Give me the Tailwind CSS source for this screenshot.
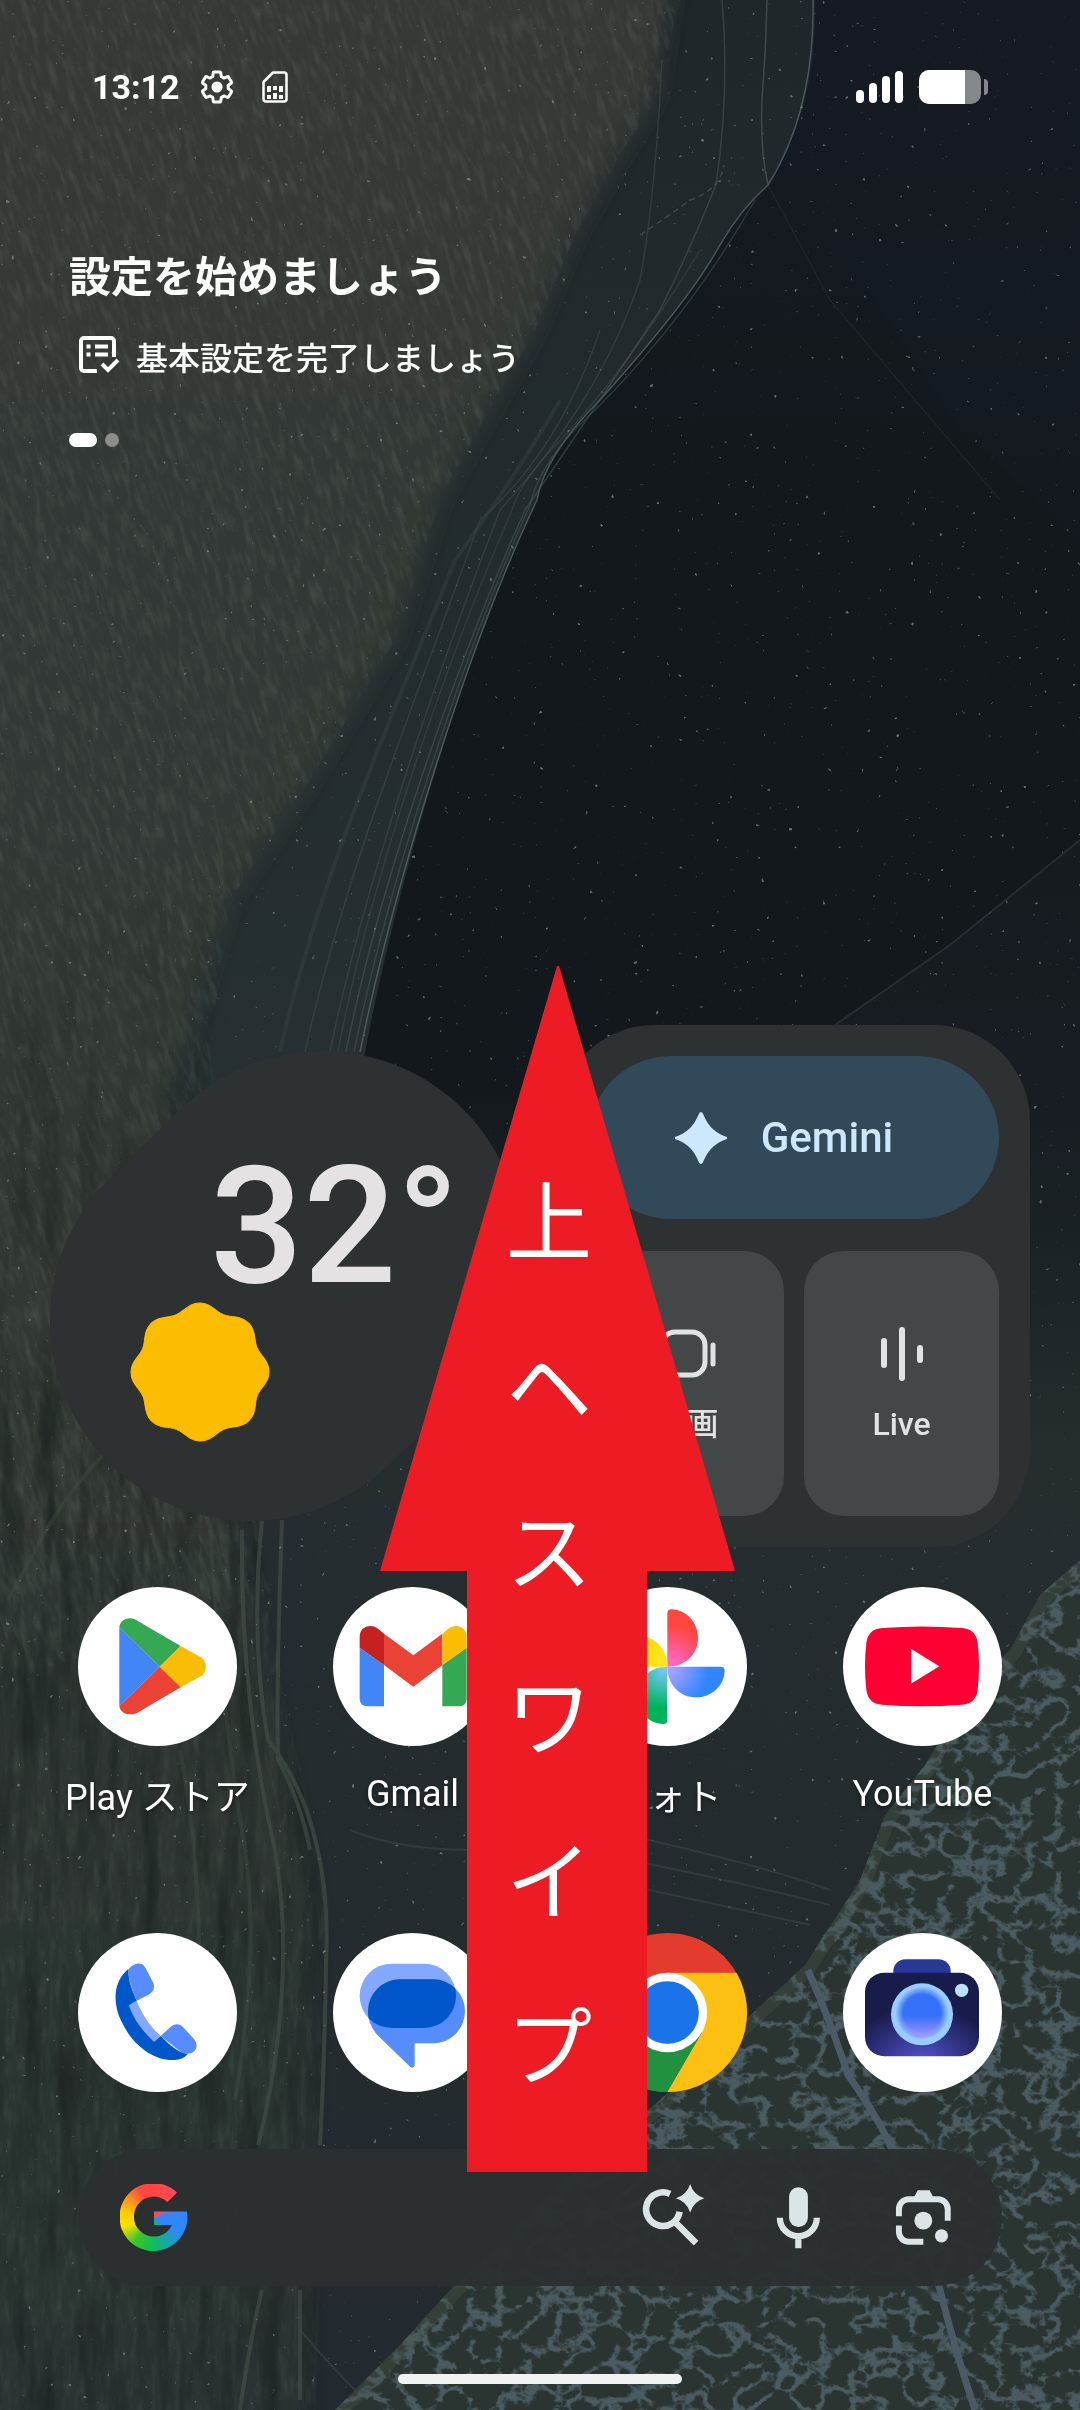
<!DOCTYPE html>
<html lang="ja">
<head>
    <meta charset="UTF-8">
    <meta name="viewport" content="width=device-width, initial-scale=1.0">
    <title>ホーム画面</title>
    <script src="https://cdn.jsdelivr.net/npm/@tailwindcss/browser@4"></script>
</head>
<body class="bg-[#12181c] text-white font-[Roboto,'Noto_Sans_CJK_JP',sans-serif]">
<div class="relative isolate flex min-h-screen flex-col overflow-hidden">

    <!-- Wallpaper -->
    <svg class="absolute inset-0 -z-10 h-full w-full" viewBox="0 0 1080 2410" preserveAspectRatio="xMidYMid slice" aria-hidden="true">
        <defs>
            <linearGradient id="sea" x1="0" y1="0" x2="0" y2="1">
                <stop offset="0" stop-color="#161b22"/>
                <stop offset=".2" stop-color="#12181c"/>
                <stop offset=".45" stop-color="#12181c"/>
                <stop offset=".6" stop-color="#252d2f"/>
                <stop offset="1" stop-color="#232a2f"/>
            </linearGradient>
            <linearGradient id="hill" x1="0" y1="0" x2="0" y2="1">
                <stop offset="0" stop-color="#151b1f"/>
                <stop offset=".4" stop-color="#171d22"/>
                <stop offset="1" stop-color="#252d2f" stop-opacity="0"/>
            </linearGradient>
            <linearGradient id="sand" x1="0" y1="0" x2="0" y2="1">
                <stop offset="0" stop-color="#343934"/>
                <stop offset=".5" stop-color="#323833"/>
                <stop offset=".8" stop-color="#2c3430"/>
                <stop offset="1" stop-color="#2b3330"/>
            </linearGradient>
            <linearGradient id="shelf" x1="0" y1="0" x2="0" y2="1">
                <stop offset="0" stop-color="#1f272b"/>
                <stop offset="1" stop-color="#293235"/>
            </linearGradient>
            <filter id="soft" x="-20%" y="-20%" width="140%" height="140%"><feGaussianBlur stdDeviation="10"/></filter>
            <filter id="ripple" x="0" y="0" width="100%" height="100%" color-interpolation-filters="sRGB">
                <feTurbulence type="fractalNoise" baseFrequency=".16 .04" numOctaves="4" seed="4"/>
                <feColorMatrix values="0 0 0 0 .42  0 0 0 0 .47  0 0 0 0 .44  2 0 0 0 -.85"/>
            </filter>
            <filter id="streak" x="0" y="0" width="100%" height="100%" color-interpolation-filters="sRGB">
                <feTurbulence type="fractalNoise" baseFrequency=".05 .008" numOctaves="3" seed="9"/>
                <feColorMatrix values="0 0 0 0 .11  0 0 0 0 .14  0 0 0 0 .13  2 0 0 0 -.85"/>
            </filter>
            <filter id="specks" x="0" y="0" width="100%" height="100%" color-interpolation-filters="sRGB">
                <feTurbulence type="fractalNoise" baseFrequency=".18" numOctaves="2" seed="21"/>
                <feColorMatrix values="0 0 0 0 .5  0 0 0 0 .56  0 0 0 0 .58  12 0 0 0 -9.200"/>
            </filter>
            <filter id="foam" x="0" y="0" width="100%" height="100%" color-interpolation-filters="sRGB">
                <feTurbulence type="turbulence" baseFrequency=".034 .04" numOctaves="4" seed="7"/>
                <feColorMatrix values="0 0 0 0 .29  0 0 0 0 .36  0 0 0 0 .38  -7 0 0 0 2"/>
            </filter>
            <linearGradient id="fadeDown" x1="0" y1="0" x2="0" y2="1">
                <stop offset="0" stop-color="#000"/>
                <stop offset=".3" stop-color="#fff"/>
            </linearGradient>
            <mask id="streakMask"><rect y="900" width="360" height="1510" fill="url(#fadeDown)"/></mask>
            <clipPath id="sandClip"><path d="M0 0H680L655 100 620 155 575 235 535 330 475 435 440 500 395 640 310 780 230 900 210 1050 250 1450 285 1700 325 1900 315 2410H0Z"/></clipPath>
            <clipPath id="coastClip"><path d="M1080 1560L1040 1595 1010 1650 970 1690 925 1765 885 1815 860 1880 805 1965 740 2025 660 2100 570 2175 450 2290 400 2345 335 2410H1080Z"/></clipPath>
        </defs>

        <rect width="1080" height="2410" fill="url(#sea)"/>
        <path d="M768 185L860 280 960 430 1080 540V0H815Z" fill="#171c25" opacity=".4"/>
        <path d="M1080 840L950 945 835 1025 700 1500H1080Z" fill="url(#hill)"/>
        <path d="M1080 840L950 945 835 1025" fill="none" stroke="#262e32" stroke-width="2"/>

        <!-- Shelf between the sand and the deep water -->
        <path d="M600 0H815Q817 110 768 185 740 210 720 245 690 300 600 400 545 455 537 500C470 640 395 880 360 1080L330 1400 0 1450V0Z" fill="url(#shelf)"/>
        <path d="M-60 -60H680L655 100 620 155 575 235 535 330 475 435 440 500 395 640 310 780 230 900 170 1100 230 1500 270 1700 315 1900 300 2470H-60Z" fill="url(#sand)" filter="url(#soft)"/>
        <g clip-path="url(#sandClip)">
            <g transform="rotate(-18)"><rect x="-500" y="-100" width="1500" height="1700" filter="url(#ripple)" opacity=".3"/></g>
            <rect y="1400" width="360" height="1010" filter="url(#ripple)" opacity=".2"/>
            <g mask="url(#streakMask)"><rect y="900" width="360" height="1510" filter="url(#streak)"/></g>
        </g>

        <!-- Ridge lines -->
        <g fill="none" stroke="#5b676a" stroke-width="1.5" opacity=".75">
            <path d="M813 0Q815 110 768 185 740 210 720 245 690 300 600 400 545 455 537 500C470 640 395 880 360 1052"/>
            <path d="M767 0Q766 50 762 100 760 150 768 185" opacity=".7"/>
            <path d="M722 0Q730 90 716 185 690 250 660 310 580 430 525 510C458 660 380 880 346 1052" opacity=".55"/>
            <path d="M662 60Q655 200 640 280 600 400 500 510C435 680 365 880 330 1052" opacity=".4"/>
            <path d="M755 200Q690 315 595 410 540 460 530 505C464 652 389 880 354 1052" opacity=".5"/>
            <path d="M700 250Q640 350 570 430 520 480 512 510C446 662 370 880 338 1052" opacity=".35"/>
            <path d="M600 330Q560 450 480 520C420 690 345 870 305 1052" stroke="#455550" opacity=".6"/>
            <path d="M560 400Q520 470 455 560C400 700 320 870 280 1052" stroke="#3c4a46" stroke-width="4" opacity=".5"/>
            <path d="M640 235Q670 215 690 200 720 190 724 165" stroke-dasharray="6 4" opacity=".7"/>
            <path d="M768 185L830 300 1000 500" opacity=".2"/>
        </g>
        <g fill="none" stroke="#424d45" stroke-width="4" opacity=".7">
            <path d="M262 1520Q250 1640 268 1740C315 1800 330 1880 326 1960Q325 2050 320 2145M300 2290V2400"/>
            <path d="M282 1520Q276 1690 278 1760 300 1800 310 1850"/>
            <path d="M242 1530Q240 1700 275 1850C292 1950 280 2060 258 2145M262 2290Q250 2340 240 2410"/>
            <path d="M210 1530Q220 1700 245 1850 260 1950 235 2100" opacity=".6"/>
            <path d="M103 1455Q60 1500 30 1560L8 1600M180 1750Q200 1850 200 2000" opacity=".6"/>
        </g>
        <g fill="none" stroke="#3b4548" stroke-width="2" opacity=".6">
            <path d="M640 1838Q760 1865 830 1890M640 1862Q750 1885 830 1905M640 1888Q720 1905 810 1925M350 1830Q400 1850 470 1850M300 2330Q360 2400 380 2410"/>
        </g>
        <rect width="1080" height="2410" filter="url(#specks)" opacity=".7"/>

        <!-- Shore -->
        <g clip-path="url(#coastClip)">
            <rect x="300" y="1500" width="780" height="910" fill="#2a3431"/>
            <rect x="300" y="1500" width="780" height="910" filter="url(#foam)"/>
            <path d="M1080 1560L1040 1595 1010 1650 970 1690 925 1765 885 1815 860 1880 805 1965 740 2025 660 2100 570 2175 450 2290 400 2345 335 2410" fill="none" stroke="#4a564d" stroke-width="24" opacity=".35"/>
            <path d="M808 1970Q830 2020 848 2075 880 2120 892 2150L940 2290Q955 2350 975 2410" fill="none" stroke="#4c5a68" stroke-width="7"/>
        </g>
    </svg>

    <!-- Status bar -->
    <header class="flex h-[174px] items-center justify-between px-[92px]">
        <div class="flex items-center">
            <time class="w-[107px] text-[34px] font-bold leading-none">13:12</time>
            <svg class="size-9" viewBox="0 0 24 24" aria-hidden="true">
                <path fill="none" stroke="#fff" stroke-width="2" stroke-linejoin="round" d="M19.43 12.98c.04-.32.07-.64.07-.98 0-.34-.03-.66-.07-.98l2.11-1.65c.19-.15.24-.42.12-.64l-2-3.46c-.09-.16-.26-.25-.44-.25-.06 0-.12.01-.17.03l-2.49 1c-.52-.4-1.08-.73-1.69-.98l-.38-2.65C14.46 2.18 14.25 2 14 2h-4c-.25 0-.46.18-.49.42l-.38 2.65c-.61.25-1.17.59-1.69.98l-2.49-1c-.06-.02-.12-.03-.18-.03-.17 0-.34.09-.43.25l-2 3.46c-.13.22-.07.49.12.64l2.11 1.65c-.04.32-.07.65-.07.98 0 .33.03.66.07.98l-2.11 1.65c-.19.15-.24.42-.12.64l2 3.46c.09.16.26.25.44.25.06 0 .12-.01.17-.03l2.49-1c.52.4 1.08.73 1.69.98l.38 2.65c.03.24.24.42.49.42h4c.25 0 .46-.18.49-.42l.38-2.65c.61-.25 1.17-.59 1.69-.98l2.49 1c.06.02.12.03.18.03.17 0 .34-.09.43-.25l2-3.46c.12-.22.07-.49-.12-.64z"/>
                <circle cx="12" cy="12" r="3.7" fill="#fff"/>
            </svg>
            <svg class="ml-[26px] h-[34px] w-7" viewBox="0 0 28 34" aria-hidden="true">
                <path d="M12 2.500H23a2.500 2.500 0 0 1 2.500 2.500V29a2.500 2.500 0 0 1-2.500 2.500H5A2.500 2.500 0 0 1 2.500 29V12Z" fill="none" stroke="#fff" stroke-width="2.500" stroke-linejoin="round"/>
                <path d="M6 16h4v6H6zM18 16h4v6h-4zM12 16h4v4h-4zM12 23h4v6h-4zM6 25h4v4H6zM18 25h4v4h-4z" fill="#fff"/>
            </svg>
        </div>
        <div class="flex items-center gap-4">
            <div class="flex items-end gap-[5px]">
                <span class="h-[13px] w-2 rounded-full bg-white"></span>
                <span class="h-5 w-2 rounded-full bg-white"></span>
                <span class="h-[27px] w-2 rounded-full bg-white"></span>
                <span class="h-8 w-2 rounded-full bg-white"></span>
            </div>
            <div class="flex items-center gap-[3px]">
                <div class="h-[34px] w-[62px] overflow-hidden rounded-[10px] bg-[#85888b]">
                    <div class="h-full bg-white" style="width: 74%"></div>
                </div>
                <span class="h-4 w-1 rounded-r-full bg-[#85888b]"></span>
            </div>
        </div>
    </header>

    <!-- At a glance -->
    <section class="flex-1 px-[69px] pt-[70px] font-['Noto_Sans_CJK_JP',sans-serif]">
        <h1 class="text-[42px] font-bold leading-[60px]">設定を始めましょう</h1>
        <a href="#" class="mt-[28px] flex h-12 items-center pl-[9px] text-[32px] font-medium">
            <svg class="mr-4 size-[42px]" viewBox="0 0 42 42" fill="none" stroke="#fff" stroke-width="4" aria-hidden="true">
                <path d="M19 36H6a3 3 0 0 1-3-3V6a3 3 0 0 1 3-3H33a3 3 0 0 1 3 3V22"/>
                <path d="M17 11.500H30M17 19.500H30M8.500 11.500h4M8.500 19.500h4M24 29l6 6 10-10"/>
            </svg>
            基本設定を完了しましょう
        </a>
        <div class="mt-[53px] flex gap-2">
            <span class="h-[14px] w-7 rounded-full bg-white"></span>
            <span class="size-[14px] rounded-full bg-[#8b8e8a]"></span>
        </div>
    </section>

    <main class="relative">
        <!-- Widgets -->
        <div class="grid grid-cols-2 items-center gap-9 px-[50px]">
            <section class="relative aspect-square" aria-label="天気">
                <svg class="absolute inset-0 h-full w-full" viewBox="0 0 472 472" aria-hidden="true">
                    <path d="M200 271L272 201" stroke="#2d3131" stroke-width="400" stroke-linecap="round"/>
                </svg>
                <div class="relative flex h-full flex-col pt-[100px]">
                    <p class="pl-[160px] text-[164px] font-medium leading-[152px] text-[#e4e2e3]">32°</p>
                    <svg class="ml-[80px] size-[140px]" viewBox="-70 -70 140 140" fill="#fcbd00" stroke="#fcbd00" aria-label="晴れ">
                        <path id="lobe" d="M0 0V-69C11 -69 16 -60 23.700 -57.300 31 -54.200 41 -57 48.800 -48.800Z"/>
                        <use href="#lobe" transform="rotate(45)"/>
                        <use href="#lobe" transform="rotate(90)"/>
                        <use href="#lobe" transform="rotate(135)"/>
                        <use href="#lobe" transform="rotate(180)"/>
                        <use href="#lobe" transform="rotate(225)"/>
                        <use href="#lobe" transform="rotate(270)"/>
                        <use href="#lobe" transform="rotate(315)"/>
                    </svg>
                </div>
            </section>

            <section class="rounded-[96px] bg-[#2d3131] p-[31px]" aria-label="Gemini">
                <button class="flex h-[163px] w-full items-center justify-center gap-[34px] rounded-full bg-[#314958] pr-5 text-[42px] font-medium text-[#cde8fd]">
                    <svg class="size-[52px]" viewBox="-26 -26 52 52" fill="#cde8fd" aria-hidden="true">
                        <path d="M0 -26C4 -26 3 -9 26 -1Q27 0 26 1C3 9 4 26 0 26S-3 9 -26 1Q-27 0 -26 -1C-3 -9 -4 -26 0 -26Z"/>
                    </svg>
                    Gemini
                </button>
                <div class="mt-8 grid grid-cols-2 gap-5 text-[32px] font-medium text-[#e1e3e3]">
                    <button class="flex h-[265px] flex-col items-center justify-center gap-5 rounded-[40px] bg-[#444747]">
                        <svg class="size-[60px]" viewBox="0 0 60 60" fill="none" stroke="#e1e3e3" stroke-width="5" stroke-linecap="round" aria-hidden="true">
                            <rect x="5" y="8" width="43" height="43" rx="13"/>
                            <path d="M56 21V40"/>
                        </svg>
                        <span class="leading-10">動画</span>
                    </button>
                    <button class="flex h-[265px] flex-col items-center justify-center gap-5 rounded-[40px] bg-[#444747]">
                        <svg class="size-[60px]" viewBox="0 0 60 60" stroke="#e1e3e3" stroke-width="6" stroke-linecap="round" aria-hidden="true">
                            <path d="M12 17V41M30 6V54M48 24V36"/>
                        </svg>
                        <span class="leading-10">Live</span>
                    </button>
                </div>
            </section>
        </div>

        <!-- Apps -->
        <nav class="mt-10 grid grid-cols-4 px-[30px] text-4xl [text-shadow:0_2px_4px_rgb(0_0_0/0.5)]" aria-label="アプリ">
            <a href="#" class="flex flex-col items-center gap-6">
                <svg class="size-[159px]" viewBox="0 0 477 477" aria-hidden="true">
                    <circle cx="238.500" cy="238.500" r="238.500" fill="#fff"/>
                    <path fill="#4285f4" d="M124 120L245 239 124 357Z"/>
                    <path fill="#34a853" d="M124 120C126 105 138 94 156 94 166 94 172 98 178 101L308 177 245 239Z"/>
                    <path fill="#fbbc04" d="M308 177L369 211C388 223 388 255 369 267L308 301 245 239Z"/>
                    <path fill="#ea4335" d="M124 357C126 372 138 382 156 382 166 382 172 380 178 377L308 301 245 239Z"/>
                </svg>
                <span class="whitespace-nowrap font-['Noto_Sans_CJK_JP',sans-serif] leading-12"><span class="font-[Roboto]">Play </span>ストア</span>
            </a>
            <a href="#" class="flex flex-col items-center gap-6">
                <svg class="size-[159px]" viewBox="0 0 477 477" aria-hidden="true">
                    <circle cx="238.500" cy="238.500" r="238.500" fill="#fff"/>
                    <path fill="#4285f4" d="M80 182L153 234V358H102A22 22 0 0 1 80 336Z"/>
                    <path fill="#34a853" d="M401 182L328 234V358H379A22 22 0 0 0 401 336Z"/>
                    <path fill="#ea4335" d="M153 140L241 205 328 140V234L241 299 153 234Z"/>
                    <path fill="#c5221f" d="M80 182V150C80 118 114 107 137 127L153 140V234Z"/>
                    <path fill="#fbbc04" d="M401 182V150C401 118 367 107 344 127L328 140V234Z"/>
                </svg>
                <span class="leading-12">Gmail</span>
            </a>
            <a href="#" class="flex flex-col items-center gap-6">
                <svg class="size-[159px]" viewBox="0 0 477 477" aria-hidden="true">
                    <defs>
                        <radialGradient id="pr" gradientUnits="userSpaceOnUse" cx="245" cy="235" r="120"><stop offset="0" stop-color="#ff6bd6"/><stop offset="1" stop-color="#ff4641"/></radialGradient>
                        <radialGradient id="pb" gradientUnits="userSpaceOnUse" cx="245" cy="235" r="120"><stop offset="0" stop-color="#b0a5ff"/><stop offset="1" stop-color="#3186ff"/></radialGradient>
                        <radialGradient id="pg" gradientUnits="userSpaceOnUse" cx="245" cy="235" r="120"><stop offset="0" stop-color="#7cc8ff"/><stop offset="1" stop-color="#00b35b"/></radialGradient>
                        <radialGradient id="py" gradientUnits="userSpaceOnUse" cx="245" cy="235" r="170"><stop offset="0" stop-color="#ffe921"/><stop offset="1" stop-color="#fc0"/></radialGradient>
                    </defs>
                    <circle cx="238.500" cy="238.500" r="238.500" fill="#fff"/>
                    <path fill="url(#pr)" d="M238 239V80Q238 67 250 67C296 68 330 108 330 153 330 201 292 239 238 239Z"/>
                    <path fill="url(#pb)" transform="rotate(90 238 239)" d="M238 239V80Q238 67 250 67C296 68 330 108 330 153 330 201 292 239 238 239Z"/>
                    <path fill="url(#pg)" transform="rotate(180 238 239)" d="M238 239V80Q238 67 250 67C296 68 330 108 330 153 330 201 292 239 238 239Z"/>
                    <path fill="url(#py)" transform="rotate(270 238 239)" d="M238 239V80Q238 67 250 67C296 68 330 108 330 153 330 201 292 239 238 239Z"/>
                </svg>
                <span class="font-['Noto_Sans_CJK_JP',sans-serif] leading-12">フォト</span>
            </a>
            <a href="#" class="flex flex-col items-center gap-6">
                <svg class="size-[159px]" viewBox="0 0 477 477" aria-hidden="true">
                    <circle cx="238.500" cy="238.500" r="238.500" fill="#fff"/>
                    <path fill="#f03" d="M118 123Q237 114 356 123 399 126 404 168 412 238 404 308 399 350 356 353 237 363 118 353 75 350 70 308 62 238 70 168 75 126 118 123Z"/>
                    <path fill="#fff" d="M204 185L289 238 204 290Z"/>
                </svg>
                <span class="leading-12">YouTube</span>
            </a>
        </nav>

        <!-- Dock -->
        <nav class="mt-[111px] grid grid-cols-4 justify-items-center px-[30px]" aria-label="ドック">
            <a href="#" aria-label="電話">
                <svg class="size-[159px]" viewBox="0 0 477 477" aria-hidden="true">
                    <circle cx="238.500" cy="238.500" r="238.500" fill="#fff"/>
                    <path fill="#578cff" d="M151 110C160 95 190 80 202 104L225 148C232 163 226 178 212 185L176 203C165 175 150 135 151 110Z"/>
                    <path fill="#85a8ff" d="M153 217L176 203C190 240 215 280 248 308L228 326C190 290 165 255 153 217Z"/>
                    <path fill="#0057cc" d="M151 108C108 142 101 205 130 265 165 340 230 385 290 381 310 379 320 373 330 362 300 362 265 325 248 309L228 326C190 290 166 256 153 217L176 203C165 175 150 145 151 108Z"/>
                    <path fill="#578cff" d="M248 309L280 280C292 271 305 271 315 282L348 318C362 335 356 355 338 361 325 364 312 360 300 350Z"/>
                </svg>
            </a>
            <a href="#" aria-label="メッセージ">
                <svg class="size-[159px]" viewBox="0 0 477 477" aria-hidden="true">
                    <clipPath id="bubble"><rect x="80" y="92" width="289" height="193" rx="96"/></clipPath>
                    <circle cx="238.500" cy="238.500" r="238.500" fill="#fff"/>
                    <rect x="80" y="92" width="289" height="193" rx="96" fill="#85a8ff"/>
                    <path fill="#578cff" d="M201 139H300A96 96 0 0 1 300 331H245V397Q243 408 232 402L133 306Q105 275 105 235A96 96 0 0 1 201 139Z"/>
                    <path fill="#0057cc" clip-path="url(#bubble)" d="M201 139H300A96 96 0 0 1 300 331H150Q105 290 105 235A96 96 0 0 1 201 139Z"/>
                </svg>
            </a>
            <a href="#" aria-label="Chrome">
                <svg class="size-[159px]" viewBox="0 0 477 477" aria-hidden="true">
                    <clipPath id="disc"><circle cx="238.500" cy="238.500" r="238.500"/></clipPath>
                    <g clip-path="url(#disc)">
                        <rect width="477" height="477" fill="#e33b2e"/>
                        <path fill="#fcc012" d="M238 119H477V477H238L341 299Z"/>
                        <path fill="#21903f" d="M238 477L341 299H135L32 119 0 60V477Z"/>
                    </g>
                    <circle cx="238.500" cy="238.500" r="119" fill="#fff"/>
                    <circle cx="238.500" cy="238.500" r="94" fill="#1a73e8"/>
                </svg>
            </a>
            <a href="#" aria-label="カメラ">
                <svg class="size-[159px]" viewBox="0 0 477 477" aria-hidden="true">
                    <defs>
                        <radialGradient id="body" cx=".5" cy="1.050" r=".65"><stop offset="0" stop-color="#5450cc"/><stop offset="1" stop-color="#181c4b"/></radialGradient>
                        <radialGradient id="glass"><stop offset=".7" stop-color="#3470f8"/><stop offset="1" stop-color="#9acdff"/></radialGradient>
                        <linearGradient id="glow" x1="0" y1="0" x2="0" y2="1"><stop offset=".5" stop-color="#9a90ff" stop-opacity="0"/><stop offset="1" stop-color="#a297ff"/></linearGradient>
                    </defs>
                    <circle cx="238.500" cy="238.500" r="238.500" fill="#fff"/>
                    <rect x="151" y="79" width="172" height="80" rx="36" fill="#283897"/>
                    <rect x="66" y="119" width="342" height="251" rx="58" fill="url(#body)"/>
                    <circle cx="237" cy="244" r="93" fill="#9acdff"/>
                    <circle cx="237" cy="240" r="80" fill="url(#glass)"/>
                    <circle cx="237" cy="246" r="66" fill="url(#glow)"/>
                    <circle cx="356" cy="172" r="20" fill="#b9e2ff"/>
                </svg>
            </a>
        </nav>

        <!-- Search bar -->
        <form class="mx-[78px] mt-[57px] flex h-[137px] items-center rounded-full bg-[#2b2f30]/97 pl-[42px] pr-[46px]" role="search">
            <span class="size-[68px] bg-[conic-gradient(#ff4641_0deg,#ff4b5b_45deg,#3186ff_80deg,#3186ff_115deg,#1aa3b0_150deg,#0ebc5f_180deg,#3cc62c_220deg,#ffe100_255deg,#ffcf00_280deg,#ff8a20_310deg,#ff4641_335deg)] [clip-path:path('M57_9L47.5_18.5A20_20_0_1_0_52_41.5H34V28H67A34_34_0_1_1_57_9Z')]"></span>
            <input type="search" aria-label="検索" class="h-full min-w-0 flex-1 bg-transparent px-5 text-4xl outline-none">
            <div class="flex gap-[59px] text-[#dbe4e7]">
                <button type="button" aria-label="AI モード">
                    <svg class="size-[66px] overflow-visible" viewBox="60 72 200 200" fill="none" stroke="currentColor" stroke-width="20" aria-hidden="true">
                        <path d="M151 99A51 51 0 1 0 180 153M166 184L230 248"/>
                        <path fill="currentColor" stroke="none" d="M212 69Q222 102 255 112 222 122 212 155 202 122 169 112 202 102 212 69Z"/>
                    </svg>
                </button>
                <button type="button" aria-label="音声検索">
                    <svg class="size-[66px]" viewBox="430 72 200 200" fill="none" stroke="currentColor" stroke-width="19" aria-hidden="true">
                        <rect x="503" y="79" width="57" height="120" rx="28" fill="currentColor" stroke="none"/>
                        <path d="M475 171A56 56 0 0 0 587 171M531 226V264"/>
                    </svg>
                </button>
                <button type="button" aria-label="Google レンズ">
                    <svg class="size-[66px]" viewBox="808 72 200 200" fill="none" stroke="currentColor" stroke-width="18" aria-hidden="true">
                        <path d="M835 167V145A30 30 0 0 1 865 115H953A30 30 0 0 1 983 145V180M835 195V214A30 30 0 0 0 865 244H909"/>
                        <g fill="currentColor" stroke="none">
                            <path d="M876 118L892 88H928L944 118Z"/>
                            <circle cx="909" cy="180" r="27"/>
                            <circle cx="964" cy="226" r="20"/>
                        </g>
                    </svg>
                </button>
            </div>
        </form>

        <!-- Swipe up hint -->
        <div class="pointer-events-none absolute -top-[59px] left-1/2 -ml-40 h-[1206px] w-[355px] bg-[#ed1c24] [clip-path:polygon(177px_0,179px_0,355px_605px,267px_605px,267px_100%,87px_100%,87px_605px,0_605px)]">
            <p class="flex flex-col pl-[126px] pt-[168px] font-['Noto_Sans_CJK_JP',sans-serif] text-[86px] font-normal leading-[165px]">
                <span>上</span>
                <span>ヘ</span>
                <span>ス</span>
                <span>ワ</span>
                <span>イ</span>
                <span>プ</span>
            </p>
        </div>
    </main>

    <!-- Gesture handle -->
    <footer class="flex justify-center pb-[26px] pt-[88px]">
        <span class="h-[10px] w-[284px] rounded-full bg-[#f2f2f2]"></span>
    </footer>
</div>
</body>
</html>
